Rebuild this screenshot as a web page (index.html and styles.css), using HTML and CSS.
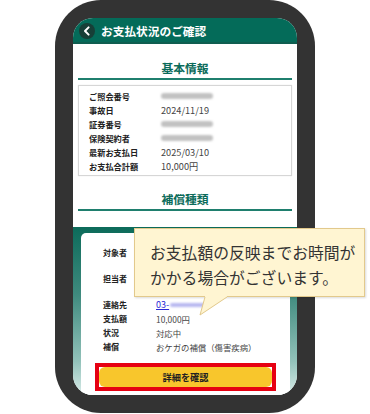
FILE: index.html
```html
<!DOCTYPE html>
<html lang="ja">
<head>
<meta charset="utf-8">
<link rel="stylesheet" href="styles.css">
</head>
<body>
<div class="phone">
  <div class="screen">
    <div class="header">
      <svg class="back" width="16" height="16" viewBox="0 0 16 16"><circle cx="8" cy="8" r="8" fill="#173f37"/><path d="M9.6 4.4 L6 8 L9.6 11.6" fill="none" stroke="#fff" stroke-width="2" stroke-linecap="round" stroke-linejoin="round"/></svg>
      <span class="title">お支払状況のご確認</span>
    </div>
    <div class="content">
      <div class="heading">基本情報</div>
      <div class="infobox">
        <div class="row"><span class="lab">ご照会番号</span><span class="blur"></span></div>
        <div class="row"><span class="lab">事故日</span><span class="val">2024/11/19</span></div>
        <div class="row"><span class="lab">証券番号</span><span class="blur"></span></div>
        <div class="row"><span class="lab">保険契約者</span><span class="blur"></span></div>
        <div class="row"><span class="lab">最新お支払日</span><span class="val">2025/03/10</span></div>
        <div class="row"><span class="lab">お支払合計額</span><span class="val">10,000円</span></div>
      </div>
      <div class="heading second">補償種類</div>
    </div>
    <div class="greenarea">
      <div class="card">
        <div class="crow tall"><span class="clab">対象者</span><span class="cval"></span></div>
        <div class="crow tall2"><span class="clab">担当者</span><span class="cval"></span></div>
        <div class="crow"><span class="clab">連絡先</span><span class="cval"><span class="link">03-</span><span class="blurlink"></span></span></div>
        <div class="crow"><span class="clab">支払額</span><span class="cval">10,000円</span></div>
        <div class="crow"><span class="clab">状況</span><span class="cval">対応中</span></div>
        <div class="crow"><span class="clab">補償</span><span class="cval">おケガの補償（傷害疾病）</span></div>
        <div class="btnframe"><div class="btn">詳細を確認</div></div>
      </div>
    </div>
  </div>
</div>
<div class="tooltip">お支払額の反映までお時間が<br>かかる場合がございます。</div>
<svg class="tail" width="34" height="24" viewBox="0 0 34 24"><polygon points="7,0 29,0 29,2 2,20 7,2" fill="#fff5d2"/><polyline points="7,2 2,20 29,2" fill="none" stroke="#e2c98c" stroke-width="1"/></svg>
</body>
</html>
```
FILE: styles.css
```css
html, body {
  margin: 0;
  padding: 0;
  background: #fff;
}
body {
  width: 370px;
  height: 414px;
  overflow: hidden;
  position: relative;
  font-family: "Noto Sans CJK JP", "Noto Sans", sans-serif;
  color: #222;
}
.phone {
  margin-left: 55px;
  width: 260px;
  height: 413px;
  box-sizing: border-box;
  padding: 18px;
  background: #333333;
  border-radius: 46px;
}
.screen {
  height: 377px;
  border-radius: 20px;
  overflow: hidden;
  background: #fff;
  display: flex;
  flex-direction: column;
}
.header {
  height: 24px;
  background: #046b59;
  border-bottom: 2px solid #0f5e50;
  display: flex;
  align-items: center;
  padding-left: 6px;
  gap: 6px;
  flex-shrink: 0;
}
.back {
  display: block;
  margin-top: 1px;
}
.title {
  color: #fff;
  font-weight: bold;
  font-size: 11.7px;
  line-height: 16px;
  margin-top: 1px;
}
.content {
  padding: 0 5px;
}
.heading {
  margin-top: 16px;
  text-align: center;
  color: #0b6b5a;
  font-weight: bold;
  font-size: 11.8px;
  line-height: 16px;
  padding-bottom: 2px;
  border-bottom: 2px solid #1f7f6e;
}
.heading.second {
  margin-top: 15px;
}
.infobox {
  margin-top: 5px;
  border: 1px solid #d6d6d6;
  box-shadow: 0 0 1px rgba(0,0,0,0.12);
  padding: 3px 0 2px 10px;
  height: 84px;
}
.row {
  display: flex;
  align-items: center;
  height: 14px;
  font-size: 8.2px;
}
.lab {
  width: 72px;
  font-weight: bold;
  color: #222;
}
.val {
  color: #444;
  font-size: 9.2px;
}
.blur {
  display: inline-block;
  width: 52px;
  height: 6px;
  background: #c2c2c2;
  border-radius: 3px;
  filter: blur(1.2px);
}
.greenarea {
  margin-top: 16px;
  flex: 1;
  background: linear-gradient(#0c6b5a 0%, #3f8a7e 40%, #93c2ba 80%, #d8ebe8 100%);
  padding: 6px 7px 0 8px;
  display: flex;
}
.card {
  flex: 1;
  background: #fff;
  border-radius: 5px 5px 0 0;
  padding-top: 12px;
}
.crow {
  display: flex;
  align-items: center;
  height: 14px;
  font-size: 8px;
  padding-left: 22px;
}
.crow.tall { padding-bottom: 12px; }
.crow.tall2 { padding-bottom: 12.5px; }
.clab {
  width: 53px;
  font-weight: bold;
  color: #222;
}
.cval {
  color: #444;
  font-size: 8.4px;
  display: flex;
  align-items: center;
}
.link {
  color: #2a2ad6;
  text-decoration: underline;
  font-size: 9px;
}
.blurlink {
  display: inline-block;
  width: 36px;
  height: 4px;
  margin-left: 1px;
  background: #b8b8f0;
  border-radius: 2px;
  filter: blur(1.2px);
}
.btnframe {
  margin: 9px 0 0 14px;
  width: 181px;
  height: 28px;
  box-sizing: border-box;
  border: 4px solid #e60012;
  background: #fff;
}
.btn {
  height: 20px;
  background: #f8c62c;
  border-radius: 6px;
  display: flex;
  align-items: center;
  justify-content: center;
  font-size: 9.2px;
  font-weight: bold;
  color: #222;
}
.tooltip {
  position: absolute;
  left: 134px;
  top: 228px;
  width: 231px;
  height: 69px;
  box-sizing: border-box;
  background: #fff5d2;
  border: 1px solid #e2c98c;
  box-shadow: 1px 1px 2px rgba(0,0,0,0.15);
  padding: 11px 0 0 15px;
  font-size: 15.8px;
  line-height: 25px;
  color: #333;
  white-space: nowrap;
}
.tail {
  position: absolute;
  left: 198px;
  top: 295px;
}
```
